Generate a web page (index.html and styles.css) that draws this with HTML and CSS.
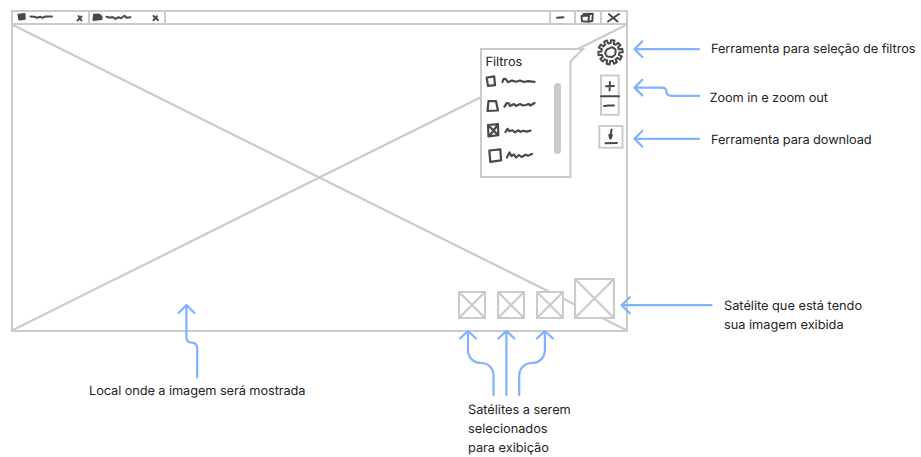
FILE: index.html
```html
<!DOCTYPE html>
<html lang="pt-BR">
<head>
<meta charset="utf-8">
<title>Wireframe</title>
<link rel="stylesheet" href="styles.css">
</head>
<body>
<main class="canvas">
  <section class="window">
    <header class="titlebar">
      <div class="tab tab-first"><svg class="ink" width="76" height="11" viewBox="13 12 76 11"><path class="solid" d="M18.500 14.700l6-.8.2 5-5.500.5z"/><path d="M30.500 16.500l4 .2 2.500 1 3.500-.9 2 1 3-1.300h6.500M77.500 20.500l4-4M78.500 16l3 4.500"/></svg></div>
      <div class="tab"><svg class="ink" width="74" height="11" viewBox="90 12 74 11"><path class="solid" d="M94 14.700l5-.2 2.500 2v2.500l-8 .9z"/><path d="M106.500 16.800l3.500 1 2.500-.8 3 1.900 3-1.700 2.500 1 3.500-2.400 2 2 4-.6M153.500 16l4.500 4M157 16.200l-3.500 4"/></svg></div>
      <div class="spacer"></div>
      <div class="control"><svg class="ink" width="24" height="11" viewBox="551 12 24 11"><path d="M557 17.700l6.500-.4"/></svg></div>
      <div class="control"><svg class="ink" width="24" height="11" viewBox="577 12 24 11"><path d="M582.500 16l7.500-.6-.5 6.300-6.500-.4zM584.500 15v-1l9.300-.3-.5 7.300-2.500.4"/></svg></div>
      <div class="control"><svg class="ink" width="24" height="11" viewBox="602 12 24 11"><path d="M608 21.500l11-7.500M609 14.200l8.500 7.200"/></svg></div>
    </header>
    <div class="viewport">
      <svg class="cross" viewBox="0 0 613 306" preserveAspectRatio="none"><path d="M0 0L613 306M0 306L613 0"/></svg>
      <aside class="filters">
        <svg class="bubble" width="106" height="132" viewBox="479 47 106 132"><path d="M481 49H583L570.500 61.500V177H481z"/></svg>
        <div class="filter-body">
          <h2>Filtros</h2>
          <svg class="ink thick" width="54" height="92" viewBox="484 72 54 92">
            <path d="M486.700 77.600l7.500-1.200.8 8.700-7 .7zM502.500 82l1-3 2-.2 2.500 3.400 4-1.600 4 1.200 4-1.300 4 1.500 4-.9 6.500.7"/>
            <path d="M488.500 101l7.500.2 2 9.300-10.500.4zM504.500 106.500l2.500-3.500 2 .5 1 2.500 4-2 2 2 4-2 3 1.500 3-.5 2.500-1 2 1.500 4-2.500"/>
            <path d="M488 125l10-.8.3 11-9.800 1.300zM490 127l7.500 7.500M496.500 126.500l-6 8M505.500 132l2-3.200 2 2.500 3-1 2.500 2 3-2 2.500 1.500 3-1 3 .8 4-1"/>
            <path d="M489.300 150.500l11-1.200.8 11-10.800 1.500zM507 157.500l2.500-5 2 3.500 2.500-1.500 2 3 3-2.500 2.500 2 4-2.300 2.500 1 4-1.700"/>
          </svg>
        </div>
        <div class="scrollbar"></div>
      </aside>
      <nav class="tools">
        <svg class="ink gear" width="30" height="28" viewBox="595 38.200 30 28"><path transform="translate(610.400 52.300) rotate(-7)" d="M8.900-1.600L12.100-1.900L12.300 1.700L8.900 1.600L8.100 3.900L10.800 5.700L8.600 8.700L6.300 6.500L4.200 7.900L5.300 10.800L2.100 12L1.300 8.900L-1.300 8.900L-2.300 12.200L-5.300 11L-4.200 7.900L-6.300 6.500L-9 8.300L-10.800 5.500L-8.100 3.900L-8.900 1.600L-12.100 1.700L-12-1.900L-8.900-1.600L-8.100-3.900L-10.900-5.900L-8.700-8.700L-6.300-6.500L-4.200-7.900L-5.100-11L-2.100-12.100L-1.300-8.900L1.300-8.900L2.200-11.800L5.500-11L4.200-7.900L6.300-6.500L8.700-8.300L10.800-5.600L8.100-3.900z"/><path d="M605 53.500l2-4 5.200-2.200 3.500 2.500-.5 5-3 2.500-5-.6z"/></svg>
        <svg class="ink" width="22" height="43" viewBox="599 73 22 43"><path class="frame" d="M601 74.500h17.700v39.200H601z"/><path d="M601 95.300h18M606 85.300l8-.4M609.900 81l-.3 8.500M604 105l5-.6 5 .1"/></svg>
        <svg class="ink" width="27" height="26" viewBox="597 124 27 26"><path class="frame" d="M599.300 126h23.200v21.700h-23.200z"/><path d="M611.500 129.500l-1.200 8.800"/><path class="tip" d="M609.600 135l.8 3.300 1.200-3"/><path d="M605.500 143.200l11.500-.3"/></svg>
      </nav>
      <footer class="satellites">
        <svg class="thumb" viewBox="0 0 28 28"><path d="M1 1h26v26H1zM1 1l26 26M27 1L1 27"/></svg>
        <svg class="thumb" viewBox="0 0 28 28"><path d="M1 1h26v26H1zM1 1l26 26M27 1L1 27"/></svg>
        <svg class="thumb" viewBox="0 0 28 28"><path d="M1 1h26v26H1zM1 1l26 26M27 1L1 27"/></svg>
        <svg class="thumb current" viewBox="0 0 41 41"><path d="M1 1h39v39H1zM1 1l39 39M40 1L1 40"/></svg>
      </footer>
    </div>
  </section>

  <svg class="arrows" width="921" height="457" viewBox="0 0 921 457">
    <path d="M699 49.200H634.500M642.300 41.300L634.500 49.200L642.300 57"/>
    <path d="M699 95.800H672Q666.500 95.800 666.500 91.700Q666.500 87.600 661.500 87.600H634.500M642.300 79.800L634.500 87.600L642.300 95.400"/>
    <path d="M699 138.800H634.500M642.300 131L634.500 138.800L642.300 146.600"/>
    <path d="M711.500 305.200H621.500M629.800 297.200L621.500 305.200L629.800 313.200"/>
    <path d="M197.200 377.500V349Q197.200 342.700 191.700 342.700Q186.400 342.700 186.400 337V305M178.500 313L186.400 305L194.500 313"/>
    <path d="M493.500 395V375.500C493.500 368 488 363 481 363C473 363 468 357 468 350V331M460 338.500L468 331L476 338.500"/>
    <path d="M506.400 395V331M498.400 338.500L506.400 331L514.400 338.500"/>
    <path d="M519.200 395V375.500C519.200 368 525 363 532 363C540 363 544.900 357 544.900 350V331M536.900 338.500L544.900 331L552.900 338.500"/>
  </svg>

  <p class="note note-filter">Ferramenta para seleção de filtros</p>
  <p class="note note-zoom">Zoom in e zoom out</p>
  <p class="note note-download">Ferramenta para download</p>
  <p class="note note-current">Satélite que está tendo<br>sua imagem exibida</p>
  <p class="note note-image">Local onde a imagem será mostrada</p>
  <p class="note note-select">Satélites a serem<br>selecionados<br>para exibição</p>
</main>
</body>
</html>
```
FILE: styles.css
```css
* { box-sizing: border-box; }

body {
  margin: 0;
  background: #fff;
  color: #252525;
  font-family: Inter, "Liberation Sans", sans-serif;
  font-size: 12.800px;
  line-height: 19.200px;
  letter-spacing: -0.090px;
  text-rendering: geometricPrecision;
}

.canvas {
  position: relative;
  width: 921px;
  height: 457px;
  overflow: hidden;
}

svg {
  display: block;
  flex: none;
  fill: none;
  stroke-linecap: round;
  stroke-linejoin: round;
}

.window {
  position: absolute;
  left: 11px;
  top: 10px;
  width: 617px;
  height: 322px;
  display: flex;
  flex-direction: column;
  border: 2px solid #cbcbcb;
}

.titlebar {
  display: flex;
  height: 13px;
  border-bottom: 2px solid #cbcbcb;
}

.tab { width: 76px; border-right: 2px solid #cbcbcb; }
.tab-first { width: 77px; }
.spacer { flex: 1; }
.control { width: 25.800px; border-left: 2px solid #cbcbcb; overflow: hidden; }

.ink { stroke: #494949; stroke-width: 2; }
.thick { stroke-width: 2.200; }
.ink .solid { fill: #494949; }
.ink .frame { stroke: #cbcbcb; fill: #fff; stroke-linejoin: miter; stroke-width: 2; }
.ink .tip { stroke-width: 2.600; }
.gear { stroke-width: 2; }

.viewport {
  position: relative;
  flex: 1;
  display: flex;
  flex-direction: column;
  justify-content: space-between;
  align-items: flex-end;
}

.cross {
  position: absolute;
  inset: 0;
  width: 100%;
  height: 100%;
  stroke: #cbcbcb;
  stroke-width: 2.200;
}

.filters {
  position: absolute;
  left: 466px;
  top: 22px;
  width: 106px;
  height: 132px;
  display: flex;
}

.bubble {
  position: absolute;
  inset: 0;
  fill: #fff;
  stroke: #cbcbcb;
  stroke-width: 2;
  stroke-linejoin: miter;
}

.filter-body { position: relative; padding: 7px 0 0 5px; }
.filter-body h2 { margin: 0 0 0 1.600px; font-size: inherit; font-weight: 400; line-height: 18px; }
.scrollbar {
  position: relative;
  width: 7px;
  height: 71px;
  margin: 36px 0 0 16px;
  border-radius: 4px;
  background: #cbc9ca;
}

.tools {
  position: relative;
  display: flex;
  flex-direction: column;
  align-items: center;
  gap: 8px;
  padding: 13px 1px 0 0;
}
.tools svg:last-child { margin-top: -1px; }

.satellites {
  position: relative;
  display: flex;
  align-items: flex-end;
  gap: 11px;
  padding: 0 11px 11px 0;
}

.thumb {
  width: 28px;
  height: 28px;
  fill: #fff;
  stroke: #cbcbcb;
  stroke-width: 2.200;
  stroke-linejoin: miter;
}
.thumb.current { width: 41px; height: 41px; margin-left: -1px; }

.arrows {
  position: absolute;
  inset: 0;
  stroke: #80b2ff;
  stroke-width: 2.200;
}

.note { position: absolute; margin: 0; white-space: nowrap; }
.note-filter { left: 711px; top: 40px; }
.note-zoom { left: 709.500px; top: 89px; }
.note-download { left: 711px; top: 131px; }
.note-current { left: 724px; top: 297px; letter-spacing: -0.020px; }
.note-image { left: 89px; top: 382px; }
.note-select { left: 468px; top: 401px; letter-spacing: -0.030px; }
```
